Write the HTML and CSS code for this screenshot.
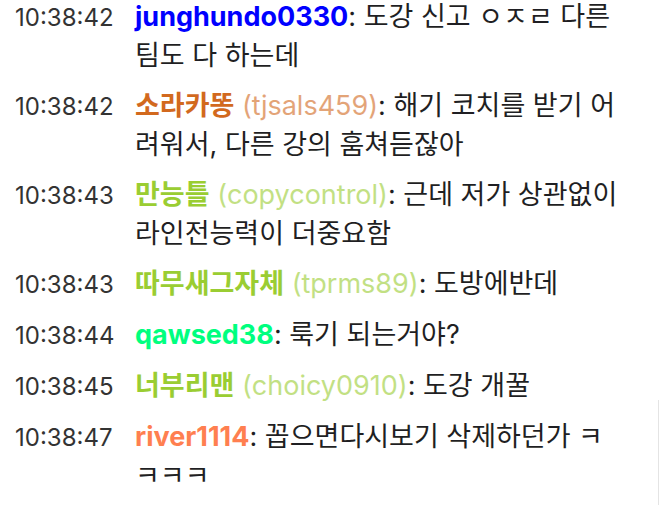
FILE: index.html
```html
<!DOCTYPE html>
<html lang="ko">
<head>
<meta charset="utf-8">
<title>Chat log</title>
<link rel="stylesheet" href="styles.css">
</head>
<body>
<div class="chat">
  <div class="row"><span class="time">10:38:42</span><div class="msg"><span class="name c-blue">junghundo0330</span>: 도강 신고 ㅇㅈㄹ 다른 팀도 다 하는데</div></div>
  <div class="row"><span class="time">10:38:42</span><div class="msg"><span class="name c-choc">소라카똥</span> <span class="id c-choc">(tjsals459)</span>: 해기 코치를 받기 어려워서, 다른 강의 훔쳐듣잖아</div></div>
  <div class="row"><span class="time">10:38:43</span><div class="msg"><span class="name c-yg">만능틀</span> <span class="id c-yg">(copycontrol)</span>: 근데 저가 상관없이 라인전능력이 더중요함</div></div>
  <div class="row"><span class="time">10:38:43</span><div class="msg"><span class="name c-yg">따무새그자체</span> <span class="id c-yg">(tprms89)</span>: 도방에반데</div></div>
  <div class="row"><span class="time">10:38:44</span><div class="msg"><span class="name c-sg">qawsed38</span>: 룩기 되는거야?</div></div>
  <div class="row"><span class="time">10:38:45</span><div class="msg"><span class="name c-yg">너부리맨</span> <span class="id c-yg">(choicy0910)</span>: 도강 개꿀</div></div>
  <div class="row"><span class="time">10:38:47</span><div class="msg"><span class="name c-coral">river1114</span>: 꼽으면다시보기 삭제하던가 ㅋㅋㅋㅋ</div></div>
</div>
<div class="scroll-edge"></div>
</body>
</html>
```
FILE: styles.css
```css
html, body {
  margin: 0;
  padding: 0;
  background: #ffffff;
}
body {
  font-family: Inter, "Noto Sans CJK KR", sans-serif;
  font-size: 27px;
  color: #1f1f23;
}
.chat {
  display: flex;
  flex-direction: column;
  gap: 11px;
  padding: 0 40px 0 15px;
  margin-top: -3px;
}
.row {
  display: flex;
  align-items: baseline;
  line-height: 39px;
}
.time {
  flex: 0 0 120px;
  font-size: 24px;
  color: #333333;
}
.msg {
  flex: 1 1 auto;
  min-width: 0;
}
.name {
  font-weight: 700;
}
.id {
  opacity: 0.6;
}
.c-blue { color: #0000ff; }
.c-choc { color: #d2691e; }
.c-yg { color: #9acd32; }
.c-sg { color: #00ff7f; }
.c-coral { color: #ff7f50; }
.scroll-edge {
  position: fixed;
  right: 2px;
  top: 400px;
  bottom: 0;
  width: 1px;
  background: #e4e4e4;
}
```
